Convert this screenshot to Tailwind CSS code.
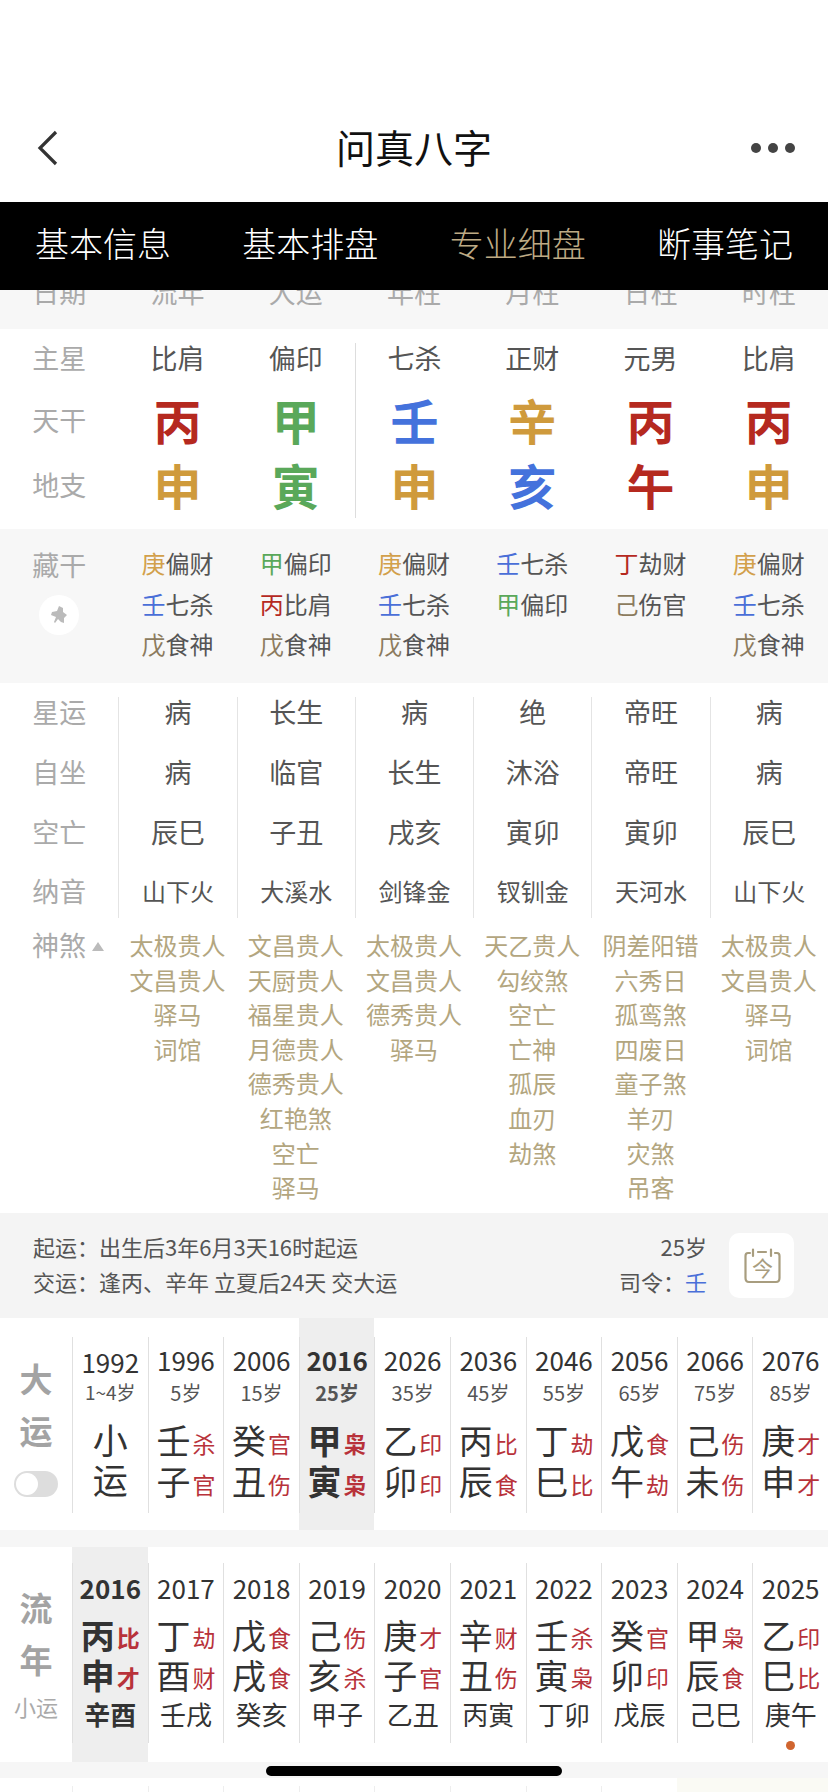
<!DOCTYPE html>
<html lang="zh-CN">
<head>
<meta charset="UTF-8">
<meta name="viewport" content="width=device-width, initial-scale=1.0">
<title>问真八字</title>
<script src="https://cdn.jsdelivr.net/npm/@tailwindcss/browser@4"></script>
</head>
<body class="relative h-[1792px] w-[828px] overflow-hidden bg-white font-['Noto_Sans_CJK_SC',sans-serif] text-[#555]">

<!-- nav -->
<header class="grid h-[202px] grid-cols-[1fr_auto_1fr] items-center pt-[94px] text-[#111]">
  <svg class="ml-[36px] h-[38px] w-[24px]" viewBox="0 0 24 38" fill="none" stroke="#333" stroke-width="3.2"><path d="M20 3 L4 19 L20 35"/></svg>
  <div class="-mt-[4px] text-[39px] leading-none">问真八字</div>
  <div class="mr-[33px] flex justify-end gap-[7px]">
    <i class="h-[10px] w-[10px] rounded-full bg-[#444]"></i><i class="h-[10px] w-[10px] rounded-full bg-[#444]"></i><i class="h-[10px] w-[10px] rounded-full bg-[#444]"></i>
  </div>
</header>

<nav class="flex h-[88px] items-center justify-between bg-black px-[35px] pb-[6px] text-[34px] leading-none font-light text-white">
  <span>基本信息</span><span>基本排盘</span><span class="text-[#bdaa85]">专业细盘</span><span>断事笔记</span>
</nav>

<!-- scrolled column heads -->
<div class="h-[39px] overflow-hidden bg-[#f7f7f7]">
  <div class="-mt-[11px] grid grid-cols-7 text-center text-[27px] leading-[26px] text-[#aaa]">
    <div>日期</div><div>流年</div><div>大运</div><div>年柱</div><div>月柱</div><div>日柱</div><div>时柱</div>
  </div>
</div>

<!-- pillars -->
<section class="pt-[14px] pb-[11px] text-center [&>div>*:nth-child(4)]:border-l [&>div>*:nth-child(4)]:border-[#ddd]">
  <div class="grid h-[46px] grid-cols-7 text-[27px] leading-[30px]">
    <div class="text-[#aaa]">主星</div><div>比肩</div><div>偏印</div><div>七杀</div><div>正财</div><div>元男</div><div>比肩</div>
  </div>
  <div class="grid h-[66px] grid-cols-7 text-[48px] leading-[61px] font-bold">
    <div class="text-[27px] font-normal text-[#aaa]">天干</div><div class="text-[#b5291f]">丙</div><div class="text-[#5aa85a]">甲</div><div class="text-[#4472dc]">壬</div><div class="text-[#cf9a3c]">辛</div><div class="text-[#b5291f]">丙</div><div class="text-[#b5291f]">丙</div>
  </div>
  <div class="grid h-[63px] grid-cols-7 text-[48px] leading-[59px] font-bold">
    <div class="text-[27px] font-normal text-[#aaa]">地支</div><div class="text-[#cf9a3c]">申</div><div class="text-[#5aa85a]">寅</div><div class="text-[#cf9a3c]">申</div><div class="text-[#4472dc]">亥</div><div class="text-[#b5291f]">午</div><div class="text-[#cf9a3c]">申</div>
  </div>
</section>

<!-- hidden stems -->
<section class="grid h-[154px] grid-cols-7 bg-[#f7f7f7] pt-[14px] text-center text-[24px] leading-[40.5px]">
  <div class="flex flex-col items-center text-[27px] text-[#aaa]">
    <div class="leading-[44px]">藏干</div>
    <div class="mt-[8px] flex h-[40px] w-[40px] items-center justify-center rounded-full bg-white">
      <svg class="h-[20px] w-[20px]" viewBox="0 0 20 20" fill="#bbb"><path d="M10 1 L14 3 L14 7 L18 10 L15 13 L15 18 L12 17 L9 14 L6 18 L5 17 L7 12 L2 10 L3 7 L8 6 Z"/></svg>
    </div>
  </div>
  <div><span class="text-[#d2a04b]">庚</span>偏财<br><span class="text-[#4a6fd8]">壬</span>七杀<br><span class="text-[#8c7b5e]">戊</span>食神</div>
  <div><span class="text-[#5aa85a]">甲</span>偏印<br><span class="text-[#b5291f]">丙</span>比肩<br><span class="text-[#8c7b5e]">戊</span>食神</div>
  <div><span class="text-[#d2a04b]">庚</span>偏财<br><span class="text-[#4a6fd8]">壬</span>七杀<br><span class="text-[#8c7b5e]">戊</span>食神</div>
  <div><span class="text-[#4a6fd8]">壬</span>七杀<br><span class="text-[#5aa85a]">甲</span>偏印</div>
  <div><span class="text-[#b5291f]">丁</span>劫财<br><span class="text-[#8c7b5e]">己</span>伤官</div>
  <div><span class="text-[#d2a04b]">庚</span>偏财<br><span class="text-[#4a6fd8]">壬</span>七杀<br><span class="text-[#8c7b5e]">戊</span>食神</div>
</section>

<!-- star luck rows -->
<section class="pt-[14px] text-center text-[27px] [&>div>*+*]:border-l [&>div>*+*]:border-[#e4e4e4] [&>div>*:first-child]:text-[#aaa]">
  <div class="grid h-[46px] grid-cols-7 leading-[30px]">
    <div>星运</div><div>病</div><div>长生</div><div>病</div><div>绝</div><div>帝旺</div><div>病</div>
  </div>
  <div class="grid h-[59px] grid-cols-7 leading-[57px]">
    <div>自坐</div><div>病</div><div>临官</div><div>长生</div><div>沐浴</div><div>帝旺</div><div>病</div>
  </div>
  <div class="grid h-[62px] grid-cols-7 leading-[60px]">
    <div>空亡</div><div>辰巳</div><div>子丑</div><div>戌亥</div><div>寅卯</div><div>寅卯</div><div>辰巳</div>
  </div>
  <div class="grid h-[46px] grid-cols-7 leading-[54px]">
    <div>纳音</div><div class="text-[24px]">山下火</div><div class="text-[24px]">大溪水</div><div class="text-[24px]">剑锋金</div><div class="text-[24px]">钗钏金</div><div class="text-[24px]">天河水</div><div class="text-[24px]">山下火</div>
  </div>
</section>

<!-- shensha -->
<section class="grid h-[303px] grid-cols-7 pt-[18px] text-center text-[24px] leading-[34.6px] text-[#b3a67f]">
  <div class="flex items-center gap-[6px] self-start pl-[32px] text-[27px] text-[#aaa]">神煞<i class="mt-[2px] h-0 w-0 border-x-[6px] border-b-[9px] border-x-transparent border-b-[#bbb]"></i></div>
  <div>太极贵人<br>文昌贵人<br>驿马<br>词馆</div>
  <div>文昌贵人<br>天厨贵人<br>福星贵人<br>月德贵人<br>德秀贵人<br>红艳煞<br>空亡<br>驿马</div>
  <div>太极贵人<br>文昌贵人<br>德秀贵人<br>驿马</div>
  <div>天乙贵人<br>勾绞煞<br>空亡<br>亡神<br>孤辰<br>血刃<br>劫煞</div>
  <div>阴差阳错<br>六秀日<br>孤鸾煞<br>四废日<br>童子煞<br>羊刃<br>灾煞<br>吊客</div>
  <div>太极贵人<br>文昌贵人<br>驿马<br>词馆</div>
</section>

<!-- luck info -->
<section class="flex h-[105px] items-center bg-[#f4f4f4] pr-[34px] pl-[33px] text-[22px] leading-[35px]">
  <div class="-mt-[4px] flex-1">
    <div>起运：出生后3年6月3天16时起运</div>
    <div>交运：逢丙、辛年 立夏后24天 交大运</div>
  </div>
  <div class="-mt-[4px] text-right">
    <div>25岁</div>
    <div>司令：<span class="text-[#4a6fd8]">壬</span></div>
  </div>
  <div class="relative ml-[22px] flex h-[65px] w-[65px] items-center justify-center rounded-[10px] bg-white">
    <svg class="absolute top-[15px] left-[15px] h-[36px] w-[37px]" viewBox="0 0 37 36" fill="none" stroke="#a89d7f" stroke-width="2.2" stroke-linecap="round"><path d="M6 5 H4 Q1.5 5 1.5 8 V30 Q1.5 34 5 34 H32 Q35.5 34 35.5 30 V8 Q35.5 5 33 5 H31 M9 1.5 V8 M27 1.5 V8 M14 4 H22"/></svg>
    <span class="relative top-[2px] left-[1px] text-[21px] leading-none text-[#a89d7f]">今</span>
  </div>
</section>

<!-- da yun -->
<section id="dayun" class="grid h-[212px] grid-cols-[72px_repeat(10,1fr)]">
  <div class="flex flex-col items-center pt-[34px] text-[33px] leading-[52px] font-bold text-[#a3a3a3]">
    <div>大</div><div>运</div>
    <div class="mt-[15px] h-[26px] w-[44px] rounded-full bg-[#ddd] p-[2px]"><div class="h-[22px] w-[22px] rounded-full bg-white"></div></div>
  </div>
</section>
<div class="h-[17px] bg-[#f6f6f6]"></div>

<!-- liu nian -->
<section id="liunian" class="grid h-[215px] grid-cols-[72px_repeat(10,1fr)]">
  <div class="flex flex-col items-center pt-[34px] text-[33px] leading-[52px] font-bold text-[#a3a3a3]">
    <div>流</div><div>年</div>
    <div class="mt-[6px] text-[22px] leading-[30px] font-normal text-[#aaa]">小运</div>
  </div>
</section>
<div class="h-[16px] bg-[#f6f6f6]"></div>

<!-- bottom row just scrolling into view -->
<div class="grid h-[14px] grid-cols-[72px_repeat(10,1fr)]">
  <div></div>
  <div class="mt-[8px] border-l border-[#eee]"></div><div class="mt-[8px] border-l border-[#eee]"></div><div class="mt-[8px] border-l border-[#eee]"></div><div class="mt-[8px] border-l border-[#eee]"></div><div class="mt-[8px] border-l border-[#eee]"></div><div class="mt-[8px] border-l border-[#eee]"></div><div class="mt-[8px] border-l border-[#eee]"></div><div class="mt-[8px] border-l border-[#eee]"></div>
  <div class="col-span-2 bg-[#fafaf4]"></div>
</div>

<!-- home indicator -->
<div class="absolute top-[1766px] left-[266px] h-[10px] w-[296px] rounded-full bg-black"></div>

<script>
  // [年份, 年龄, 天干, 十神, 地支, 十神]
  const DAYUN = [
    ['1996','5岁','壬','杀','子','官'],
    ['2006','15岁','癸','官','丑','伤'],
    ['2016','25岁','甲','枭','寅','枭'],
    ['2026','35岁','乙','印','卯','印'],
    ['2036','45岁','丙','比','辰','食'],
    ['2046','55岁','丁','劫','巳','比'],
    ['2056','65岁','戊','食','午','劫'],
    ['2066','75岁','己','伤','未','伤'],
    ['2076','85岁','庚','才','申','才'],
  ];
  const LIUNIAN = [
    ['2016','丙','比','申','才','辛酉'],
    ['2017','丁','劫','酉','财','壬戌'],
    ['2018','戊','食','戌','食','癸亥'],
    ['2019','己','伤','亥','杀','甲子'],
    ['2020','庚','才','子','官','乙丑'],
    ['2021','辛','财','丑','伤','丙寅'],
    ['2022','壬','杀','寅','枭','丁卯'],
    ['2023','癸','官','卯','印','戊辰'],
    ['2024','甲','枭','辰','食','己巳'],
    ['2025','乙','印','巳','比','庚午'],
  ];
  const gan = (a, b) => `<div class="flex h-[41px] items-center justify-center gap-[2px]"><span class="text-[34px] leading-[41px]">${a}</span><span class="mt-[6px] text-[23px] leading-[26px] text-[#b8323a]">${b}</span></div>`;

  const dayun = document.getElementById('dayun');
  dayun.insertAdjacentHTML('beforeend', `
    <div><div class="mt-[19px] h-[176px] border-l border-[#e0e0e0] text-center text-[#333]">
      <div class="pt-[11px] text-[26px] leading-[28px]">1992</div>
      <div class="mt-[4px] text-[19px] leading-[24px] text-[#555]">1~4岁</div>
      <div class="mt-[15px] text-[35px] leading-[40px]">小<br>运</div>
    </div></div>`);
  DAYUN.forEach((d) => {
    const on = d[0] === '2016';
    dayun.insertAdjacentHTML('beforeend', `
      <div class="${on ? 'bg-[#eeeeee] font-bold' : ''}"><div class="mt-[19px] h-[176px] border-l border-[#e0e0e0] text-center text-[#333]">
        <div class="pt-[9px] text-[26px] leading-[28px]">${d[0]}</div>
        <div class="mt-[7px] text-[20px] leading-[24px] text-[#555]">${d[1]}</div>
        <div class="mt-[14px]">${gan(d[2], d[3])}${gan(d[4], d[5])}</div>
      </div></div>`);
  });

  const liunian = document.getElementById('liunian');
  LIUNIAN.forEach((d) => {
    const on = d[0] === '2016';
    liunian.insertAdjacentHTML('beforeend', `
      <div class="${on ? 'bg-[#eeeeee] font-bold' : ''}"><div class="mt-[16px] h-[180px] border-l border-[#e0e0e0] text-center text-[#333]">
        <div class="pt-[11px] text-[26px] leading-[28px]">${d[0]}</div>
        <div class="mt-[12px] [&>div]:h-[40px]">${gan(d[1], d[2])}${gan(d[3], d[4])}</div>
        <div class="text-[26px] leading-[40px]">${d[5]}</div>
        ${d[0] === '2025' ? '<div class="mx-auto mt-[7px] h-[9px] w-[9px] rounded-full bg-[#d0652f]"></div>' : ''}
      </div></div>`);
  });
</script>
</body>
</html>
